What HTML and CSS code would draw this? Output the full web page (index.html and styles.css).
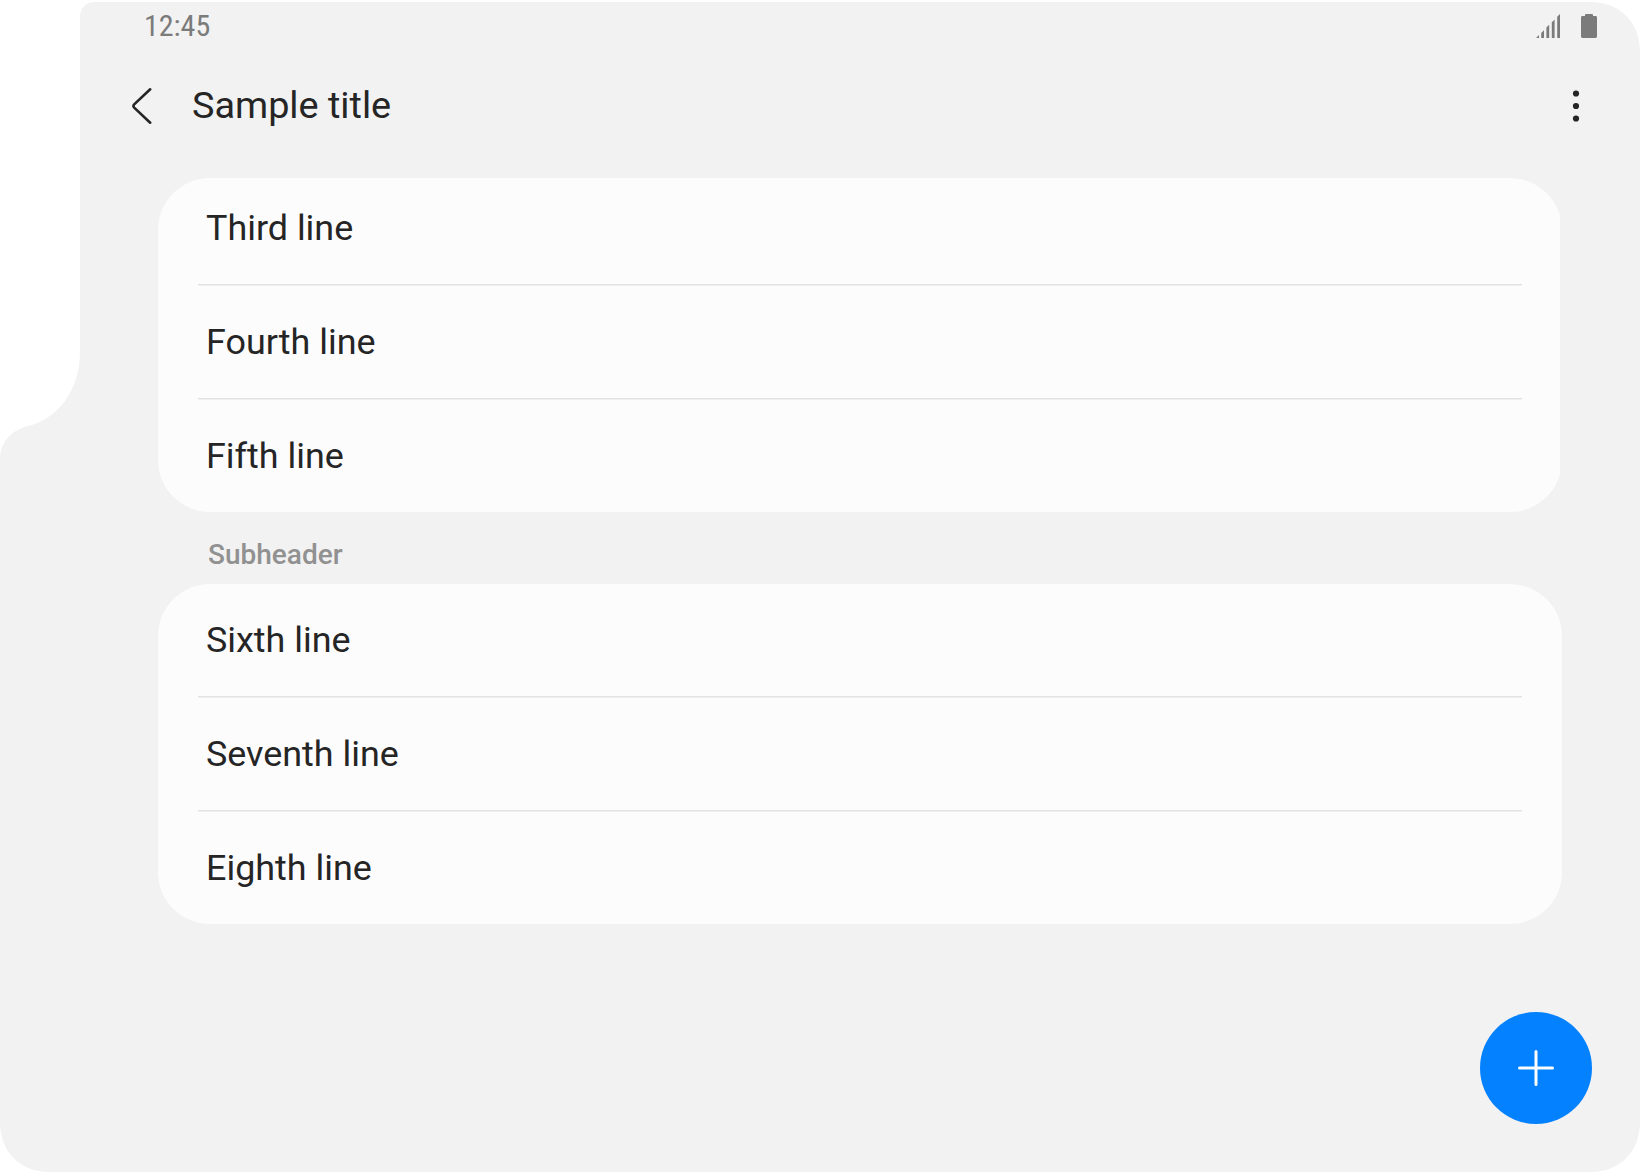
FILE: index.html
```html
<!DOCTYPE html>
<html lang="en">
<head>
<meta charset="utf-8">
<title>Sample title</title>
<link rel="stylesheet" href="styles.css">
</head>
<body>
<div class="screen">
  <header class="status">
    <span class="clock">12:45</span>
    <div class="indicators">
      <svg class="signal" width="24" height="24" viewBox="0 0 24 24"><path d="M0 24L3 21V24ZM5.2 19L8 16.2V24H5.2ZM10.4 13.6L13.2 10.8V24H10.4ZM15.8 8.2L18.6 5.4V24H15.8ZM21.2 2.8L24 0V24H21.2Z"/></svg>
      <svg class="battery" width="16" height="24" viewBox="0 0 16 24"><path d="M4 2V1Q4 0 5 0H11Q12 0 12 1V2H14.6Q16 2 16 3.4V22.6Q16 24 14.6 24H1.4Q0 24 0 22.6V3.4Q0 2 1.4 2Z"/></svg>
    </div>
  </header>
  <nav class="appbar">
    <svg class="back" width="22" height="38" viewBox="0 0 22 38"><path d="M19.2 2.3L3.2 17.4Q1.7 19 3.2 20.6L19.2 35.7"/></svg>
    <h1 class="title">Sample title</h1>
    <svg class="more" width="8" height="32" viewBox="0 0 8 32"><circle cx="4" cy="3.5" r="3.1"/><circle cx="4" cy="16" r="3.1"/><circle cx="4" cy="28.5" r="3.1"/></svg>
  </nav>
  <main class="content">
    <ul class="card card-scrolled">
      <li class="row">Third line</li>
      <li class="row">Fourth line</li>
      <li class="row">Fifth line</li>
    </ul>
    <h2 class="subheader">Subheader</h2>
    <ul class="card">
      <li class="row">Sixth line</li>
      <li class="row">Seventh line</li>
      <li class="row">Eighth line</li>
    </ul>
  </main>
  <button class="fab" aria-label="Add"><svg width="36" height="36" viewBox="0 0 36 36"><path d="M18 1.5V34.5M1.5 18H34.5"/></svg></button>
</div>
</body>
</html>
```
FILE: styles.css
```css
* { box-sizing: border-box; margin: 0; padding: 0; }
body { background: #fff; font-family: Roboto, sans-serif; color: #252525; }
.screen {
  position: relative;
  width: 1640px;
  height: 1172px;
  background: #f2f2f2;
  clip-path: path("M95 2H1590C1620 2 1640 22 1640 52V1122C1640 1152 1620 1172 1590 1172H50C20 1172 0 1152 0 1122V459C0 443 11 430 28 426C58 419 80 390 80 352V17C80 8 86 2 95 2Z");
}
.status {
  display: flex;
  justify-content: space-between;
  height: 52px;
  padding: 8px 43px 0 144px;
  color: #7b7b7b;
}
.clock {
  font-family: "Roboto Condensed", Roboto, sans-serif;
  font-size: 30px;
  line-height: 36px;
}
.indicators { display: flex; gap: 21px; padding-top: 6px; fill: #7b7b7b; }
.appbar {
  display: flex;
  align-items: center;
  height: 108px;
  padding: 0 60px 0 131px;
}
.back { fill: none; stroke: #252525; stroke-width: 2.6; stroke-linecap: round; }
.title { flex: 1; margin: -3px 0 0 39px; font-size: 37.8px; font-weight: 400; line-height: 46px; }
.more { fill: #252525; }
.content { padding: 18px 78px 0 158px; }
.card {
  list-style: none;
  height: 340px;
  padding: 0 40px;
  background: #fcfcfc;
  border-radius: 52px;
  overflow: hidden;
}
.card-scrolled { height: 334px; clip-path: inset(0 2px 0 0); }
.row {
  height: 114px;
  padding: 34px 8px 0;
  font-size: 35.9px;
  line-height: 44px;
  background: linear-gradient(#e2e2e2 0 1px, #efefef 1px 2px) bottom / 100% 2px no-repeat;
}
.row:last-child { height: 112px; background: none; }
.card-scrolled .row:first-child { height: 108px; padding-top: 28px; }
.subheader {
  height: 72px;
  padding: 26px 0 0 50px;
  font-size: 28px;
  font-weight: 500;
  line-height: 34px;
  color: #919191;
}
.fab {
  position: absolute;
  right: 48px;
  bottom: 48px;
  display: flex;
  align-items: center;
  justify-content: center;
  width: 112px;
  height: 112px;
  border: 0;
  border-radius: 50%;
  background: #0381fe;
}
.fab svg { fill: none; stroke: #fcfcfc; stroke-width: 3; stroke-linecap: round; }
```
